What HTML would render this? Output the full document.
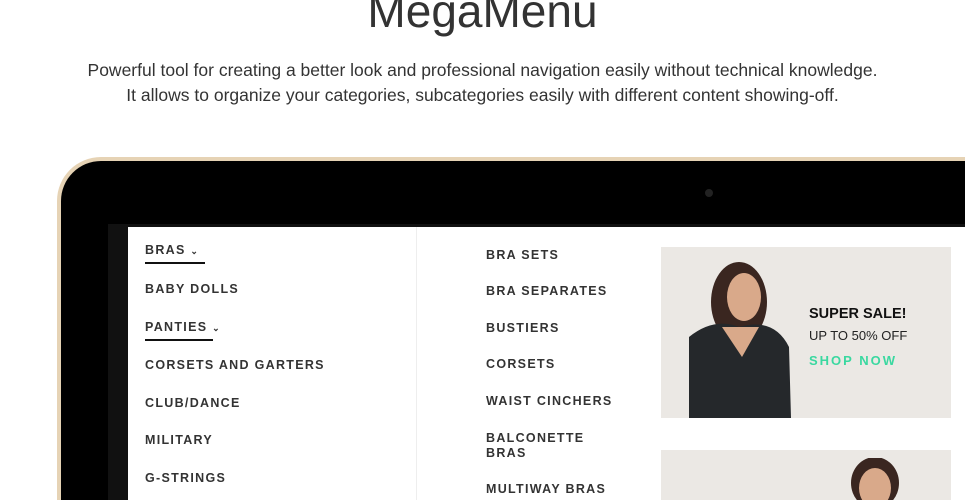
<!DOCTYPE html>
<html style="overflow:hidden;width:965px;height:500px"><head><meta charset="utf-8"><style>
html,body{margin:0;width:965px;height:500px;overflow:hidden}
body{background:#fff;font-family:"Liberation Sans",sans-serif;position:relative}
.t{position:absolute;left:0;width:965px;text-align:center;color:#333}
h1{position:absolute;top:-16px;left:0;width:965px;text-align:center;margin:0;font-weight:normal;font-size:46px;color:#333}
.lap{position:absolute;left:57px;top:157px;width:908px;height:343px;border-radius:44px 0 0 0;background:#e6d3b5}
.bez{position:absolute;left:61px;top:161px;width:904px;height:339px;border-radius:40px 0 0 0;background:#000}
.cam{position:absolute;left:705px;top:189px;width:8px;height:8px;border-radius:50%;background:#222}
.scr{position:absolute;left:108px;top:224px;width:857px;height:276px;background:#111}
.wh{position:absolute;left:128px;top:227px;width:837px;height:273px;background:#fff}
.div{position:absolute;left:416px;top:227px;width:1px;height:273px;background:#eee}
.m{position:absolute;font-size:12.5px;letter-spacing:1.3px;color:#333;font-weight:bold;white-space:nowrap}
.m span{font-size:9px}
.ul{position:absolute;height:2px;background:#111}
.b{position:absolute;background:#ebe8e4;overflow:hidden}
</style></head><body>
<h1>MegaMenu</h1>
<div class="t" style="top:60px;font-size:17.5px">Powerful tool for creating a better look and professional navigation easily without technical knowledge.</div>
<div class="t" style="top:85px;font-size:17.5px">It allows to organize your categories, subcategories easily with different content showing-off.</div>
<div class="lap"></div><div class="bez"></div><div class="cam"></div>
<div class="scr"></div><div class="wh"></div><div class="div"></div>
<div class="m" style="left:145px;top:243px">BRAS <span>&#8964;</span></div><div class="ul" style="left:145px;top:262px;width:60px"></div>
<div class="m" style="left:145px;top:282px">BABY DOLLS</div>
<div class="m" style="left:145px;top:320px">PANTIES <span>&#8964;</span></div><div class="ul" style="left:145px;top:339px;width:68px"></div>
<div class="m" style="left:145px;top:358px">CORSETS AND GARTERS</div>
<div class="m" style="left:145px;top:396px">CLUB/DANCE</div>
<div class="m" style="left:145px;top:433px">MILITARY</div>
<div class="m" style="left:145px;top:471px">G-STRINGS</div>
<div class="m" style="left:486px;top:248px">BRA SETS</div>
<div class="m" style="left:486px;top:284px">BRA SEPARATES</div>
<div class="m" style="left:486px;top:321px">BUSTIERS</div>
<div class="m" style="left:486px;top:357px">CORSETS</div>
<div class="m" style="left:486px;top:394px">WAIST CINCHERS</div>
<div class="m" style="left:486px;top:431px;line-height:15px">BALCONETTE<br>BRAS</div>
<div class="m" style="left:486px;top:482px">MULTIWAY BRAS</div>
<div class="b" style="left:661px;top:247px;width:290px;height:171px"></div>
<svg style="position:absolute;left:684px;top:257px" width="110" height="161"><ellipse cx="55" cy="45" rx="28" ry="40" fill="#3a2620"/><ellipse cx="60" cy="40" rx="17" ry="24" fill="#d9a98a"/><path d="M5 161 L5 80 Q30 60 55 70 Q90 60 105 90 L107 161Z" fill="#25282b"/><path d="M38 70 L58 100 L75 70Z" fill="#d9a98a"/></svg>
<div style="position:absolute;left:809px;top:306px;font-size:14.5px;font-weight:bold;color:#111">SUPER SALE!</div>
<div style="position:absolute;left:809px;top:328px;font-size:13px;color:#222">UP TO 50% OFF</div>
<div style="position:absolute;left:809px;top:353px;font-size:13px;font-weight:bold;letter-spacing:2px;color:#3ad8a0">SHOP NOW</div>
<div class="b" style="left:661px;top:450px;width:290px;height:50px"><svg style="position:absolute;left:184px;top:8px" width="60" height="42"><ellipse cx="30" cy="25" rx="24" ry="26" fill="#3a2620"/><ellipse cx="30" cy="30" rx="16" ry="20" fill="#d9a98a"/></svg></div>
</body></html>
